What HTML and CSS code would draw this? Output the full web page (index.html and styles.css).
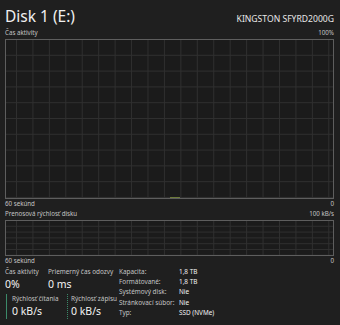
FILE: index.html
```html
<!DOCTYPE html>
<html lang="sk">
<head>
    <meta charset="UTF-8">
    <title>Disk 1 (E:)</title>
    <link rel="stylesheet" href="styles.css">
</head>
<body>
    <div class="page">
        <div class="header">
            <h1>Disk 1 (E:)</h1>
            <div class="model">KINGSTON SFYRD2000G</div>
        </div>

        <div class="caption">
            <span>Čas aktivity</span>
            <span>100%</span>
        </div>
        <div class="graph graph-activity">
            <div class="blip"></div>
        </div>
        <div class="caption">
            <span>60 sekúnd</span>
            <span>0</span>
        </div>

        <div class="caption">
            <span>Prenosová rýchlosť disku</span>
            <span>100 kB/s</span>
        </div>
        <div class="graph graph-transfer"></div>
        <div class="caption">
            <span>60 sekúnd</span>
            <span>0</span>
        </div>

        <div class="stats">
            <div class="stats-left">
                <div class="stat-row">
                    <div class="stat stat-activity">
                        <div class="stat-label">Čas aktivity</div>
                        <div class="stat-value">0%</div>
                    </div>
                    <div class="stat">
                        <div class="stat-label">Priemerný čas odozvy</div>
                        <div class="stat-value">0 ms</div>
                    </div>
                </div>
                <div class="stat-row">
                    <div class="stat stat-read">
                        <div class="stat-label">Rýchlosť čítania</div>
                        <div class="stat-value">0 kB/s</div>
                    </div>
                    <div class="stat stat-write">
                        <div class="stat-label">Rýchlosť zápisu</div>
                        <div class="stat-value">0 kB/s</div>
                    </div>
                </div>
            </div>
            <dl class="props">
                <dt>Kapacita:</dt><dd>1,8 TB</dd>
                <dt>Formátované:</dt><dd>1,8 TB</dd>
                <dt>Systémový disk:</dt><dd>Nie</dd>
                <dt>Stránkovací súbor:</dt><dd>Nie</dd>
                <dt>Typ:</dt><dd>SSD (NVMe)</dd>
            </dl>
        </div>
    </div>
</body>
</html>
```

FILE: styles.css
```css
body {
    margin: 0;
    background-color: #1f1f1f;
    color: #c8c8c8;
    font-family: 'Noto Sans', sans-serif;
}
.page {
    padding: 0 6px 0 5px;
}
.header {
    display: flex;
    justify-content: space-between;
    align-items: baseline;
    height: 28px;
}
.header h1 {
    margin: 0;
    padding-top: 5px;
    font-size: 15.5px;
    font-weight: normal;
    color: #f0f0f0;
    line-height: 22px;
}
.model {
    font-size: 8.6px;
    color: #e8e8e8;
}
.caption {
    display: flex;
    justify-content: space-between;
    font-size: 6.2px;
    line-height: 10px;
    height: 10px;
    color: #c4c4c4;
}
.graph {
    position: relative;
    border: 1px solid #5e5e5e;
    background-color: #1b1b1b;
    background-image:
        linear-gradient(to right, #2f2f2f 1px, transparent 1px),
        linear-gradient(to bottom, #2f2f2f 1px, transparent 1px);
}
.graph-activity {
    margin-top: 1px;
    height: 158px;
    background-size: 16.45px 15.8px;
    background-position: 10px -1px;
}
.graph-transfer {
    margin-top: 1px;
    height: 34px;
    background-size: 16.45px 5.8px;
    background-position: 10px -1px;
}
.blip {
    position: absolute;
    left: 164px;
    bottom: 0;
    width: 10px;
    height: 1px;
    background-color: #6c7a3a;
}
.stats {
    display: flex;
    align-items: flex-start;
    padding-top: 1px;
}
.stats-left {
    width: 114px;
}
.stat-row {
    display: flex;
}
.stat {
    white-space: nowrap;
}
.stat-activity {
    width: 43px;
}
.stat-label {
    font-size: 6.4px;
    line-height: 10px;
    color: #c4c4c4;
}
.stat-value {
    font-size: 10.5px;
    line-height: 15px;
    color: #f2f2f2;
}
.stat-read {
    width: 55px;
    margin-left: 1px;
    padding-left: 5px;
    border-left: 1px solid #3c8a6a;
}
.stat-write {
    padding-left: 3px;
    border-left: 1px dotted #3c8a6a;
}
.stat-row + .stat-row {
    margin-top: 2px;
}
.props {
    display: grid;
    grid-template-columns: 60px auto;
    align-content: start;
    margin: 0;
    font-size: 6.4px;
    line-height: 10.2px;
}
.props dt {
    color: #c4c4c4;
    white-space: nowrap;
}
.props dd {
    margin: 0;
    color: #f2f2f2;
}
```
